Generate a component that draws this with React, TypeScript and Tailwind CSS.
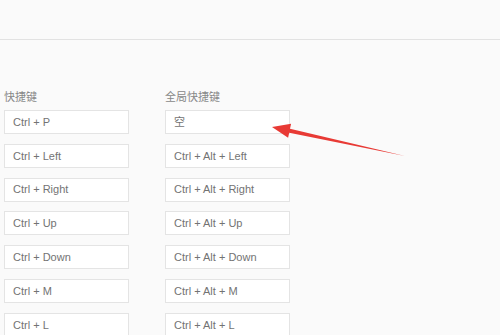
const LOCAL_KEYS = ["Ctrl + P", "Ctrl + Left", "Ctrl + Right", "Ctrl + Up", "Ctrl + Down", "Ctrl + M", "Ctrl + L"];
const GLOBAL_KEYS = ["空", "Ctrl + Alt + Left", "Ctrl + Alt + Right", "Ctrl + Alt + Up", "Ctrl + Alt + Down", "Ctrl + Alt + M", "Ctrl + Alt + L"];

function KeyColumn({ title, keys }: { title: string; keys: string[] }) {
  return (
    <div className="w-[125px] flex flex-col">
      <div className="h-[14px] text-[11px] leading-[14px] text-[#888] mb-[6px]">{title}</div>
      <div className="flex flex-col gap-[9.8px]">
        {keys.map((k) => (
          <div
            key={k}
            className="h-[24px] bg-white border border-[#e4e4e4] pl-[8px] flex items-center text-[11px] text-[#737373]"
          >
            {k}
          </div>
        ))}
      </div>
    </div>
  );
}

export default function App() {
  return (
    <div
      className="relative w-[500px] h-[335px] overflow-hidden bg-[#fafafa]"
      style={{ fontFamily: '"Liberation Sans", "Noto Sans CJK SC", sans-serif' }}
    >
      <div className="h-[40px] border-b border-[#e2e2e2]" />
      <div className="pt-[50px] pl-[4px] flex gap-[36px]">
        <KeyColumn title="快捷键" keys={LOCAL_KEYS} />
        <KeyColumn title="全局快捷键" keys={GLOBAL_KEYS} />
      </div>
      <svg className="absolute left-0 top-0" width="500" height="335" viewBox="0 0 500 335">
        <polygon
          points="272,127 291.1,123.8 290,128.8 405,156 289.2,132.8 288.1,137.8"
          fill="#e83a35"
        />
      </svg>
    </div>
  );
}
